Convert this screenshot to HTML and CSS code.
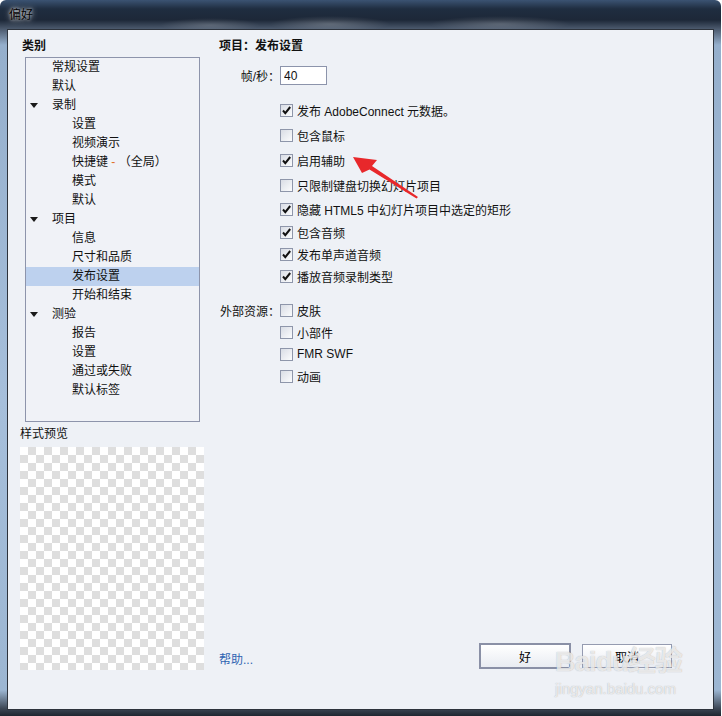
FILE: index.html
```html
<!DOCTYPE html>
<html lang="zh-CN">
<head>
  <meta charset="UTF-8">
  <meta name="viewport" content="width=device-width, initial-scale=1.0">
  <title>偏好</title>
  <link rel="stylesheet" href="styles.css">
</head>
<body>
  <div class="window">
    <div class="titlebar">偏好</div>
    <div class="client">
      <div class="left">
        <div class="heading cat">类别</div>
        <div class="tree">
          <div class="node"><span class="twisty"></span>常规设置</div>
          <div class="node"><span class="twisty"></span>默认</div>
          <div class="node"><span class="twisty open"></span>录制</div>
          <div class="node l2"><span class="twisty"></span>设置</div>
          <div class="node l2"><span class="twisty"></span>视频演示</div>
          <div class="node l2"><span class="twisty"></span>快捷键&nbsp;<span class="dash">-</span>&nbsp;（全局）</div>
          <div class="node l2"><span class="twisty"></span>模式</div>
          <div class="node l2"><span class="twisty"></span>默认</div>
          <div class="node"><span class="twisty open"></span>项目</div>
          <div class="node l2"><span class="twisty"></span>信息</div>
          <div class="node l2"><span class="twisty"></span>尺寸和品质</div>
          <div class="node l2 sel"><span class="twisty"></span>发布设置</div>
          <div class="node l2"><span class="twisty"></span>开始和结束</div>
          <div class="node"><span class="twisty open"></span>测验</div>
          <div class="node l2"><span class="twisty"></span>报告</div>
          <div class="node l2"><span class="twisty"></span>设置</div>
          <div class="node l2"><span class="twisty"></span>通过或失败</div>
          <div class="node l2"><span class="twisty"></span>默认标签</div>
        </div>
        <div class="preview-label">样式预览</div>
        <div class="checker"></div>
      </div>

      <div class="right">
        <div class="heading">项目：发布设置</div>
        <div class="form">
          <div class="row fps"><span class="lbl">帧/秒：</span><input class="num" type="text" value="40"></div>

          <div class="row tall first"><span class="lbl"></span><span class="cb"><svg viewBox="0 0 11 11"><path d="M2 5.5l2.3 2.6L9.2 2"/></svg></span>发布 AdobeConnect 元数据。</div>
          <div class="row tall"><span class="lbl"></span><span class="cb"></span>包含鼠标</div>
          <div class="row tall"><span class="lbl"></span><span class="cb"><svg viewBox="0 0 11 11"><path d="M2 5.5l2.3 2.6L9.2 2"/></svg></span>启用辅助</div>
          <div class="row tall"><span class="lbl"></span><span class="cb"></span>只限制键盘切换幻灯片项目</div>
          <div class="row mid"><span class="lbl"></span><span class="cb"><svg viewBox="0 0 11 11"><path d="M2 5.5l2.3 2.6L9.2 2"/></svg></span>隐藏 HTML5 中幻灯片项目中选定的矩形</div>
          <div class="row"><span class="lbl"></span><span class="cb"><svg viewBox="0 0 11 11"><path d="M2 5.5l2.3 2.6L9.2 2"/></svg></span>包含音频</div>
          <div class="row"><span class="lbl"></span><span class="cb"><svg viewBox="0 0 11 11"><path d="M2 5.5l2.3 2.6L9.2 2"/></svg></span>发布单声道音频</div>
          <div class="row"><span class="lbl"></span><span class="cb"><svg viewBox="0 0 11 11"><path d="M2 5.5l2.3 2.6L9.2 2"/></svg></span>播放音频录制类型</div>

          <div class="row ext"><span class="lbl">外部资源：</span><span class="cb"></span>皮肤</div>
          <div class="row"><span class="lbl"></span><span class="cb"></span>小部件</div>
          <div class="row"><span class="lbl"></span><span class="cb"></span>FMR SWF</div>
          <div class="row"><span class="lbl"></span><span class="cb"></span>动画</div>
        </div>

        <div class="footer">
          <a class="help" href="#">帮助...</a>
          <button class="btn default">好</button>
          <button class="btn">取消</button>
        </div>
      </div>
    </div>

    <svg class="arrow" width="722" height="716" viewBox="0 0 722 716">
      <polygon points="353,157 377,160 372,166 418,197 416.5,198.5 369.5,169.5 362,173" fill="#e8282b"/>
    </svg>

    <div class="watermark">
      <div class="wm-logo">Bai<span class="paw">du</span>经验</div>
      <div class="wm-url">jingyan.baidu.com</div>
    </div>
  </div>
</body>
</html>
```

FILE: styles.css
```css
body {
  margin: 0;
  background: #fff;
  font-family: "Liberation Sans", "Noto Sans CJK SC", sans-serif;
  font-size: 12px;
  color: #111;
}
.window {
  position: relative;
  width: 721px;
  height: 716px;
  border-radius: 6px 6px 0 0;
  background:
    radial-gradient(ellipse 60px 8px at 330px 24px, rgba(255,255,255,0.22), transparent),
    radial-gradient(ellipse 70px 8px at 500px 24px, rgba(255,255,255,0.2), transparent),
    radial-gradient(ellipse 50px 7px at 210px 25px, rgba(255,255,255,0.18), transparent),
    linear-gradient(180deg, #3b5372 0, #1f2d40 9px, #1d2838 20px, #4c5a6e 29px, #95afcc 45px, #a6bfdb 400px, #9cb6d2 690px, #3a4452 709px, #1f2630 716px);
  overflow: hidden;
}
.titlebar {
  height: 29px;
  line-height: 28px;
  padding-left: 9px;
  font-family: "Noto Sans CJK SC", sans-serif;
  color: #000;
  text-shadow: 0 0 6px rgba(255,255,255,0.8), 0 0 3px rgba(255,255,255,0.8);
}
.client {
  margin: 0 7px;
  height: 681px;
  box-sizing: border-box;
  border: 1px solid #2d333c;
  background: #eef1f6;
  display: grid;
  grid-template-columns: 211px 1fr;
}
.heading {
  font-weight: bold;
  line-height: 16px;
  padding-top: 8px;
}
.left {
  padding-left: 12px;
}
.heading.cat {
  margin-left: 2px;
}
.tree {
  margin: 3px 0 0 5px;
  width: 175px;
  height: 365px;
  box-sizing: border-box;
  border: 1px solid #8d94ab;
  background: #f0f2f7;
}
.node {
  display: flex;
  box-sizing: border-box;
  height: 19px;
  line-height: 16px;
  padding: 1px 0 0 4px;
  white-space: nowrap;
}
.node.l2 {
  padding-left: 24px;
}
.node.sel {
  background: #bdd1ee;
}
.twisty {
  flex: none;
  width: 8px;
  height: 0;
  margin-right: 14px;
}
.twisty.open {
  width: 0;
  margin-top: 6px;
  border-left: 4px solid transparent;
  border-right: 4px solid transparent;
  border-top: 5px solid #1a1a1a;
}
.dash {
  color: #e0702a;
}
.preview-label {
  margin-top: 4px;
  line-height: 16px;
}
.checker {
  margin-top: 5px;
  width: 184px;
  height: 223px;
  background-color: #fff;
  background-image:
    linear-gradient(45deg, #dedede 25%, transparent 25%, transparent 75%, #dedede 75%),
    linear-gradient(45deg, #dedede 25%, transparent 25%, transparent 75%, #dedede 75%);
  background-size: 16px 16px;
  background-position: 0 0, 8px 8px;
}
.right {
  display: flex;
  flex-direction: column;
  padding-right: 41px;
}
.form {
  margin-top: 12px;
}
.row {
  display: flex;
  align-items: center;
  height: 22px;
  white-space: nowrap;
}
.row.fps {
  height: 19px;
}
.row.tall {
  height: 25px;
}
.row.mid {
  height: 23px;
}
.row.first {
  margin-top: 13px;
}
.row.ext {
  margin-top: 12px;
}
.lbl {
  flex: none;
  width: 61px;
  text-align: right;
}
.num {
  width: 47px;
  height: 19px;
  box-sizing: border-box;
  border: 1px solid #8c94ab;
  background: #fff;
  padding: 0 3px;
  font: inherit;
  color: #111;
}
.cb {
  flex: none;
  width: 13px;
  height: 13px;
  box-sizing: border-box;
  margin-right: 4px;
  border: 1px solid #8e96aa;
  background: linear-gradient(135deg, #d9dde5, #fbfcfd);
}
.cb svg {
  display: block;
  width: 11px;
  height: 11px;
}
.cb path {
  fill: none;
  stroke: #111;
  stroke-width: 2;
}
.footer {
  margin-top: auto;
  padding-bottom: 40px;
  display: flex;
  align-items: center;
}
.help {
  margin-right: auto;
  margin-top: 4px;
  color: #2f65b2;
  text-decoration: none;
}
.btn {
  width: 90px;
  height: 24px;
  margin-left: 11px;
  border: 1px solid #959bb0;
  background: linear-gradient(180deg, #ffffff, #e9ecf2);
  font: inherit;
  color: #000;
  padding: 0;
}
.btn.default {
  width: 92px;
  height: 26px;
  border: 2px solid #8a90a6;
}
.arrow {
  position: absolute;
  left: 0;
  top: 0;
  pointer-events: none;
}
.watermark {
  position: absolute;
  left: 555px;
  top: 645px;
  color: rgba(255,255,255,0.72);
  text-shadow: 0 0 1px rgba(110,110,110,0.55);
  pointer-events: none;
}
.wm-logo {
  font-size: 28px;
  font-weight: bold;
  line-height: 34px;
  letter-spacing: -1px;
}
.wm-url {
  font-size: 15px;
  line-height: 18px;
  margin-top: 1px;
}
```
